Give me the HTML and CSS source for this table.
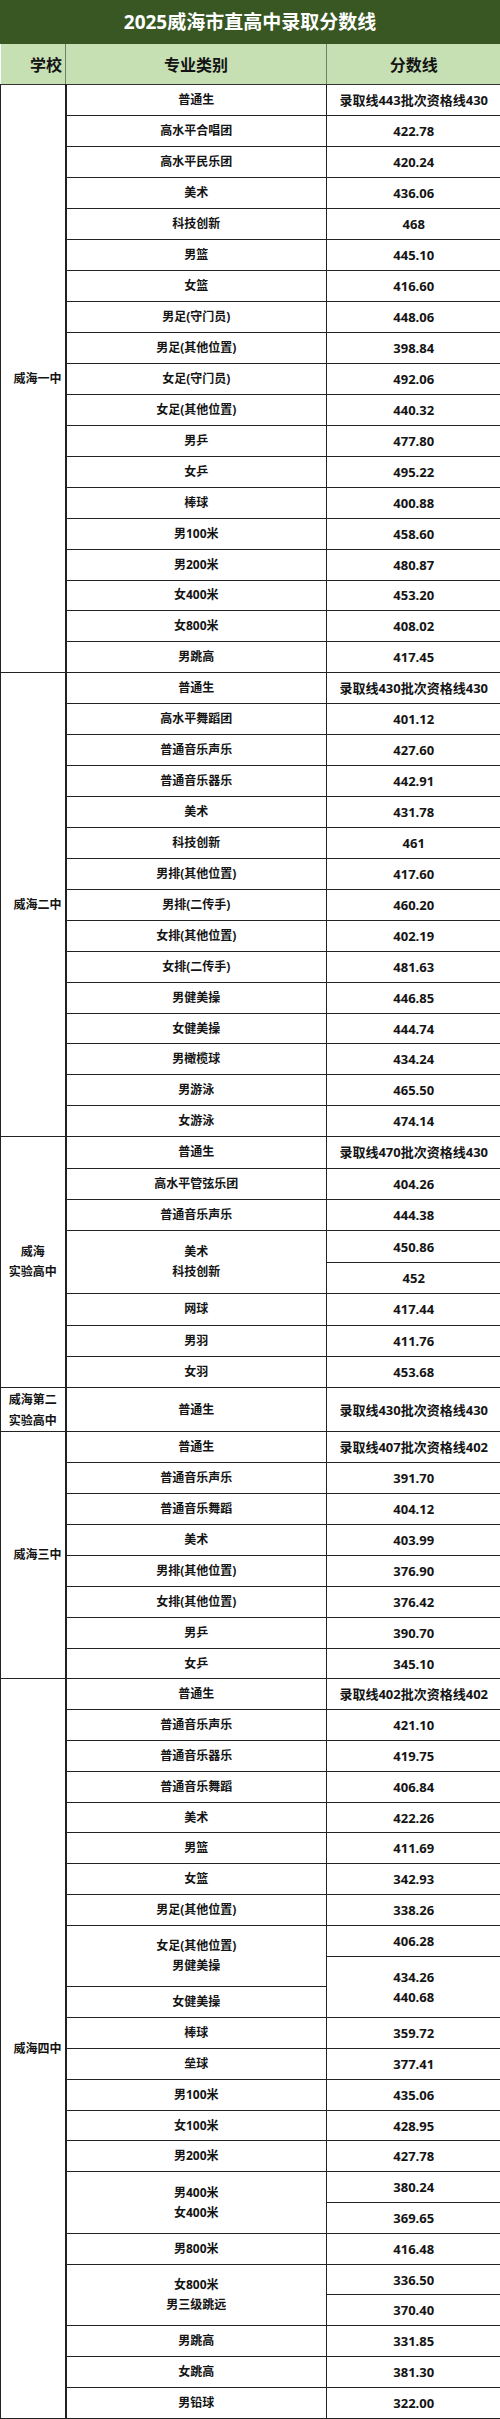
FILE: index.html
```html
<!DOCTYPE html>
<html lang="zh-CN">
<head>
<meta charset="utf-8">
<title>2025威海市直高中录取分数线</title>
<link rel="stylesheet" href="styles.css">
</head>
<body>
<div class="title">2025威海市直高中录取分数线</div>
<table class="scores">
  <colgroup><col class="c1"><col class="c2"><col class="c3"></colgroup>
  <thead>
    <tr><th class="h-school">学校</th><th>专业类别</th><th>分数线</th></tr>
  </thead>
  <tbody class="s1">
    <tr><td class="sch" rowspan="19">威海一中</td><td>普通生</td><td class="line">录取线443批次资格线430</td></tr>
    <tr><td>高水平合唱团</td><td class="num">422.78</td></tr>
    <tr><td>高水平民乐团</td><td class="num">420.24</td></tr>
    <tr><td>美术</td><td class="num">436.06</td></tr>
    <tr><td>科技创新</td><td class="num">468</td></tr>
    <tr><td>男篮</td><td class="num">445.10</td></tr>
    <tr><td>女篮</td><td class="num">416.60</td></tr>
    <tr><td>男足(守门员)</td><td class="num">448.06</td></tr>
    <tr><td>男足(其他位置)</td><td class="num">398.84</td></tr>
    <tr><td>女足(守门员)</td><td class="num">492.06</td></tr>
    <tr><td>女足(其他位置)</td><td class="num">440.32</td></tr>
    <tr><td>男乒</td><td class="num">477.80</td></tr>
    <tr><td>女乒</td><td class="num">495.22</td></tr>
    <tr><td>棒球</td><td class="num">400.88</td></tr>
    <tr><td>男100米</td><td class="num">458.60</td></tr>
    <tr><td>男200米</td><td class="num">480.87</td></tr>
    <tr><td>女400米</td><td class="num">453.20</td></tr>
    <tr><td>女800米</td><td class="num">408.02</td></tr>
    <tr><td>男跳高</td><td class="num">417.45</td></tr>
  </tbody>
  <tbody class="s2">
    <tr><td class="sch" rowspan="15">威海二中</td><td>普通生</td><td class="line">录取线430批次资格线430</td></tr>
    <tr><td>高水平舞蹈团</td><td class="num">401.12</td></tr>
    <tr><td>普通音乐声乐</td><td class="num">427.60</td></tr>
    <tr><td>普通音乐器乐</td><td class="num">442.91</td></tr>
    <tr><td>美术</td><td class="num">431.78</td></tr>
    <tr><td>科技创新</td><td class="num">461</td></tr>
    <tr><td>男排(其他位置)</td><td class="num">417.60</td></tr>
    <tr><td>男排(二传手)</td><td class="num">460.20</td></tr>
    <tr><td>女排(其他位置)</td><td class="num">402.19</td></tr>
    <tr><td>女排(二传手)</td><td class="num">481.63</td></tr>
    <tr><td>男健美操</td><td class="num">446.85</td></tr>
    <tr><td>女健美操</td><td class="num">444.74</td></tr>
    <tr><td>男橄榄球</td><td class="num">434.24</td></tr>
    <tr><td>男游泳</td><td class="num">465.50</td></tr>
    <tr><td>女游泳</td><td class="num">474.14</td></tr>
  </tbody>
  <tbody class="s3">
    <tr><td class="sch two" rowspan="8">威海<br>实验高中</td><td>普通生</td><td class="line">录取线470批次资格线430</td></tr>
    <tr><td>高水平管弦乐团</td><td class="num">404.26</td></tr>
    <tr><td>普通音乐声乐</td><td class="num">444.38</td></tr>
    <tr><td class="two" rowspan="2">美术<br>科技创新</td><td class="num">450.86</td></tr>
    <tr><td class="num">452</td></tr>
    <tr><td>网球</td><td class="num">417.44</td></tr>
    <tr><td>男羽</td><td class="num">411.76</td></tr>
    <tr><td>女羽</td><td class="num">453.68</td></tr>
  </tbody>
  <tbody class="s4">
    <tr><td class="sch two">威海第二<br>实验高中</td><td>普通生</td><td class="line">录取线430批次资格线430</td></tr>
  </tbody>
  <tbody class="s5">
    <tr><td class="sch" rowspan="8">威海三中</td><td>普通生</td><td class="line">录取线407批次资格线402</td></tr>
    <tr><td>普通音乐声乐</td><td class="num">391.70</td></tr>
    <tr><td>普通音乐舞蹈</td><td class="num">404.12</td></tr>
    <tr><td>美术</td><td class="num">403.99</td></tr>
    <tr><td>男排(其他位置)</td><td class="num">376.90</td></tr>
    <tr><td>女排(其他位置)</td><td class="num">376.42</td></tr>
    <tr><td>男乒</td><td class="num">390.70</td></tr>
    <tr><td>女乒</td><td class="num">345.10</td></tr>
  </tbody>
  <tbody class="s6">
    <tr><td class="sch" rowspan="24">威海四中</td><td>普通生</td><td class="line">录取线402批次资格线402</td></tr>
    <tr><td>普通音乐声乐</td><td class="num">421.10</td></tr>
    <tr><td>普通音乐器乐</td><td class="num">419.75</td></tr>
    <tr><td>普通音乐舞蹈</td><td class="num">406.84</td></tr>
    <tr><td>美术</td><td class="num">422.26</td></tr>
    <tr><td>男篮</td><td class="num">411.69</td></tr>
    <tr><td>女篮</td><td class="num">342.93</td></tr>
    <tr><td>男足(其他位置)</td><td class="num">338.26</td></tr>
    <tr><td class="two" rowspan="2">女足(其他位置)<br>男健美操</td><td class="num">406.28</td></tr>
    <tr><td class="num two" rowspan="2">434.26<br>440.68</td></tr>
    <tr><td>女健美操</td></tr>
    <tr><td>棒球</td><td class="num">359.72</td></tr>
    <tr><td>垒球</td><td class="num">377.41</td></tr>
    <tr><td>男100米</td><td class="num">435.06</td></tr>
    <tr><td>女100米</td><td class="num">428.95</td></tr>
    <tr><td>男200米</td><td class="num">427.78</td></tr>
    <tr><td class="two" rowspan="2">男400米<br>女400米</td><td class="num">380.24</td></tr>
    <tr><td class="num">369.65</td></tr>
    <tr><td>男800米</td><td class="num">416.48</td></tr>
    <tr><td class="two" rowspan="2">女800米<br>男三级跳远</td><td class="num">336.50</td></tr>
    <tr><td class="num">370.40</td></tr>
    <tr><td>男跳高</td><td class="num">331.85</td></tr>
    <tr><td>女跳高</td><td class="num">381.30</td></tr>
    <tr><td>男铅球</td><td class="num">322.00</td></tr>
  </tbody>
</table>
</body>
</html>
```
FILE: styles.css
```css
html, body {
  margin: 0;
  padding: 0;
  background: #ffffff;
}

body {
  width: 500px;
  font-family: "Open Sans", "Noto Sans CJK SC", sans-serif;
  color: #141414;
}

.title {
  height: 44px;
  background: #385723;
  color: #ffffff;
  font-size: 19px;
  font-weight: 700;
  line-height: 44px;
  text-align: center;
}

.scores {
  width: 500px;
  border-collapse: collapse;
  table-layout: fixed;
}

.c1 { width: 65px; }
.c2 { width: 261px; }
.c3 { width: 174px; }

.scores th {
  height: 40px;
  padding: 0;
  background: #c6e0b4;
  font-size: 16px;
  font-weight: 700;
  text-align: center;
  border-left: 1px solid #6f7f64;
  border-bottom: 1px solid #333333;
}

.scores th.h-school {
  text-align: right;
  padding-right: 3px;
  border-left: none;
}

.scores td {
  padding: 0;
  border: 1px solid #222222;
  text-align: center;
  vertical-align: middle;
  font-size: 12px;
  font-weight: 700;
  line-height: 16px;
  white-space: nowrap;
}

.scores td:last-child {
  border-right: none;
}

.scores td.sch {
  text-align: right;
  padding-right: 3px;
  border-right: 2px solid #222222;
}

.scores td.sch.two {
  text-align: center;
  padding-right: 0;
}

.scores td.two {
  line-height: 20px;
}

.scores td.num {
  font-size: 13px;
}

.scores td.line {
  font-size: 13px;
  font-weight: 700;
}

.s1 tr { height: 30.98px; }
.s2 tr { height: 30.93px; }
.s3 tr { height: 31.4px; }
.s4 tr { height: 44px; }
.s4 td.sch { line-height: 21px; }
.s5 tr { height: 30.9px; }
.s6 tr { height: 30.8px; }
```
